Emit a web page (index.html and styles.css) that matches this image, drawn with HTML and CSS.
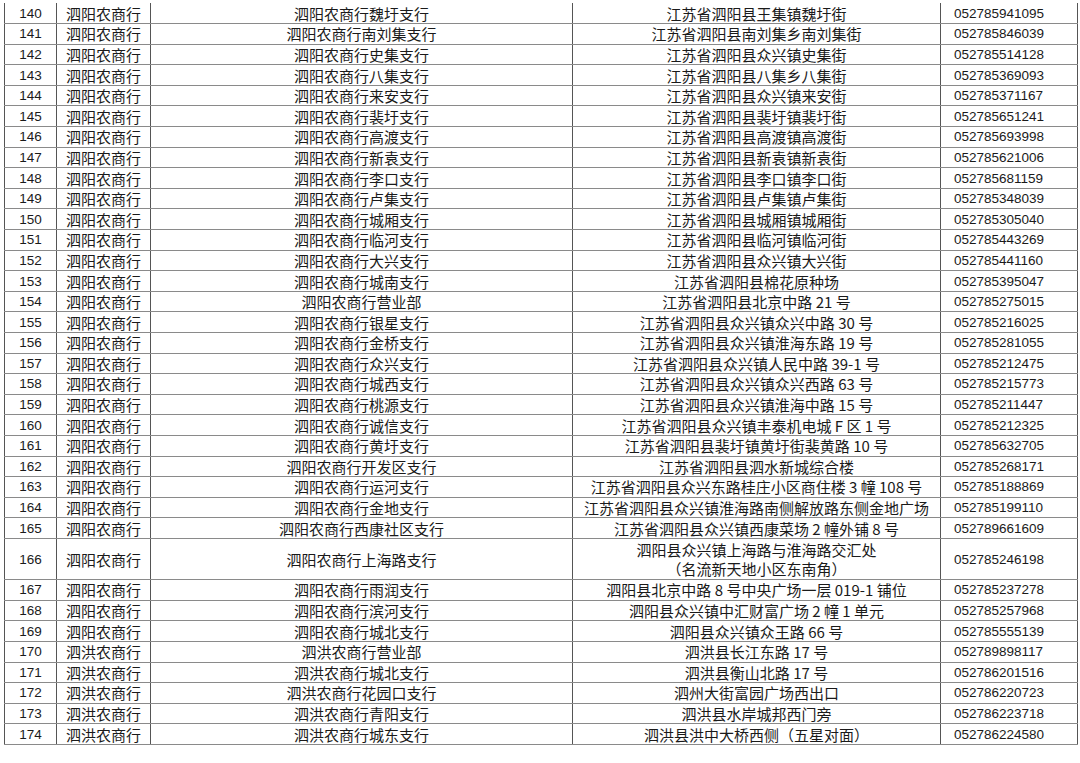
FILE: index.html
```html
<!DOCTYPE html>
<html lang="zh-CN">
<head>
<meta charset="utf-8">
<title>网点列表</title>
<link rel="stylesheet" href="styles.css">
</head>
<body>
<table class="list">
<colgroup>
<col class="c-no"><col class="c-bank"><col class="c-name"><col class="c-addr"><col class="c-tel">
</colgroup>
<tbody>
<tr><td class="no">140</td><td class="bank">泗阳农商行</td><td class="name">泗阳农商行魏圩支行</td><td class="addr">江苏省泗阳县王集镇魏圩街</td><td class="tel">052785941095</td></tr>
<tr><td class="no">141</td><td class="bank">泗阳农商行</td><td class="name">泗阳农商行南刘集支行</td><td class="addr">江苏省泗阳县南刘集乡南刘集街</td><td class="tel">052785846039</td></tr>
<tr><td class="no">142</td><td class="bank">泗阳农商行</td><td class="name">泗阳农商行史集支行</td><td class="addr">江苏省泗阳县众兴镇史集街</td><td class="tel">052785514128</td></tr>
<tr><td class="no">143</td><td class="bank">泗阳农商行</td><td class="name">泗阳农商行八集支行</td><td class="addr">江苏省泗阳县八集乡八集街</td><td class="tel">052785369093</td></tr>
<tr><td class="no">144</td><td class="bank">泗阳农商行</td><td class="name">泗阳农商行来安支行</td><td class="addr">江苏省泗阳县众兴镇来安街</td><td class="tel">052785371167</td></tr>
<tr><td class="no">145</td><td class="bank">泗阳农商行</td><td class="name">泗阳农商行裴圩支行</td><td class="addr">江苏省泗阳县裴圩镇裴圩街</td><td class="tel">052785651241</td></tr>
<tr><td class="no">146</td><td class="bank">泗阳农商行</td><td class="name">泗阳农商行高渡支行</td><td class="addr">江苏省泗阳县高渡镇高渡街</td><td class="tel">052785693998</td></tr>
<tr><td class="no">147</td><td class="bank">泗阳农商行</td><td class="name">泗阳农商行新袁支行</td><td class="addr">江苏省泗阳县新袁镇新袁街</td><td class="tel">052785621006</td></tr>
<tr><td class="no">148</td><td class="bank">泗阳农商行</td><td class="name">泗阳农商行李口支行</td><td class="addr">江苏省泗阳县李口镇李口街</td><td class="tel">052785681159</td></tr>
<tr><td class="no">149</td><td class="bank">泗阳农商行</td><td class="name">泗阳农商行卢集支行</td><td class="addr">江苏省泗阳县卢集镇卢集街</td><td class="tel">052785348039</td></tr>
<tr><td class="no">150</td><td class="bank">泗阳农商行</td><td class="name">泗阳农商行城厢支行</td><td class="addr">江苏省泗阳县城厢镇城厢街</td><td class="tel">052785305040</td></tr>
<tr><td class="no">151</td><td class="bank">泗阳农商行</td><td class="name">泗阳农商行临河支行</td><td class="addr">江苏省泗阳县临河镇临河街</td><td class="tel">052785443269</td></tr>
<tr><td class="no">152</td><td class="bank">泗阳农商行</td><td class="name">泗阳农商行大兴支行</td><td class="addr">江苏省泗阳县众兴镇大兴街</td><td class="tel">052785441160</td></tr>
<tr><td class="no">153</td><td class="bank">泗阳农商行</td><td class="name">泗阳农商行城南支行</td><td class="addr">江苏省泗阳县棉花原种场</td><td class="tel">052785395047</td></tr>
<tr><td class="no">154</td><td class="bank">泗阳农商行</td><td class="name">泗阳农商行营业部</td><td class="addr">江苏省泗阳县北京中路 21 号</td><td class="tel">052785275015</td></tr>
<tr><td class="no">155</td><td class="bank">泗阳农商行</td><td class="name">泗阳农商行银星支行</td><td class="addr">江苏省泗阳县众兴镇众兴中路 30 号</td><td class="tel">052785216025</td></tr>
<tr><td class="no">156</td><td class="bank">泗阳农商行</td><td class="name">泗阳农商行金桥支行</td><td class="addr">江苏省泗阳县众兴镇淮海东路 19 号</td><td class="tel">052785281055</td></tr>
<tr><td class="no">157</td><td class="bank">泗阳农商行</td><td class="name">泗阳农商行众兴支行</td><td class="addr">江苏省泗阳县众兴镇人民中路 39-1 号</td><td class="tel">052785212475</td></tr>
<tr><td class="no">158</td><td class="bank">泗阳农商行</td><td class="name">泗阳农商行城西支行</td><td class="addr">江苏省泗阳县众兴镇众兴西路 63 号</td><td class="tel">052785215773</td></tr>
<tr><td class="no">159</td><td class="bank">泗阳农商行</td><td class="name">泗阳农商行桃源支行</td><td class="addr">江苏省泗阳县众兴镇淮海中路 15 号</td><td class="tel">052785211447</td></tr>
<tr><td class="no">160</td><td class="bank">泗阳农商行</td><td class="name">泗阳农商行诚信支行</td><td class="addr">江苏省泗阳县众兴镇丰泰机电城 F 区 1 号</td><td class="tel">052785212325</td></tr>
<tr><td class="no">161</td><td class="bank">泗阳农商行</td><td class="name">泗阳农商行黄圩支行</td><td class="addr">江苏省泗阳县裴圩镇黄圩街裴黄路 10 号</td><td class="tel">052785632705</td></tr>
<tr><td class="no">162</td><td class="bank">泗阳农商行</td><td class="name">泗阳农商行开发区支行</td><td class="addr">江苏省泗阳县泗水新城综合楼</td><td class="tel">052785268171</td></tr>
<tr><td class="no">163</td><td class="bank">泗阳农商行</td><td class="name">泗阳农商行运河支行</td><td class="addr">江苏省泗阳县众兴东路桂庄小区商住楼 3 幢 108 号</td><td class="tel">052785188869</td></tr>
<tr><td class="no">164</td><td class="bank">泗阳农商行</td><td class="name">泗阳农商行金地支行</td><td class="addr">江苏省泗阳县众兴镇淮海路南侧解放路东侧金地广场</td><td class="tel">052785199110</td></tr>
<tr><td class="no">165</td><td class="bank">泗阳农商行</td><td class="name">泗阳农商行西康社区支行</td><td class="addr">江苏省泗阳县众兴镇西康菜场 2 幢外铺 8 号</td><td class="tel">052789661609</td></tr>
<tr class="tall"><td class="no">166</td><td class="bank">泗阳农商行</td><td class="name">泗阳农商行上海路支行</td><td class="addr">泗阳县众兴镇上海路与淮海路交汇处<br>（名流新天地小区东南角）</td><td class="tel">052785246198</td></tr>
<tr><td class="no">167</td><td class="bank">泗阳农商行</td><td class="name">泗阳农商行雨润支行</td><td class="addr">泗阳县北京中路 8 号中央广场一层 019-1 铺位</td><td class="tel">052785237278</td></tr>
<tr><td class="no">168</td><td class="bank">泗阳农商行</td><td class="name">泗阳农商行滨河支行</td><td class="addr">泗阳县众兴镇中汇财富广场 2 幢 1 单元</td><td class="tel">052785257968</td></tr>
<tr><td class="no">169</td><td class="bank">泗阳农商行</td><td class="name">泗阳农商行城北支行</td><td class="addr">泗阳县众兴镇众王路 66 号</td><td class="tel">052785555139</td></tr>
<tr><td class="no">170</td><td class="bank">泗洪农商行</td><td class="name">泗洪农商行营业部</td><td class="addr">泗洪县长江东路 17 号</td><td class="tel">052789898117</td></tr>
<tr><td class="no">171</td><td class="bank">泗洪农商行</td><td class="name">泗洪农商行城北支行</td><td class="addr">泗洪县衡山北路 17 号</td><td class="tel">052786201516</td></tr>
<tr><td class="no">172</td><td class="bank">泗洪农商行</td><td class="name">泗洪农商行花园口支行</td><td class="addr">泗州大街富园广场西出口</td><td class="tel">052786220723</td></tr>
<tr><td class="no">173</td><td class="bank">泗洪农商行</td><td class="name">泗洪农商行青阳支行</td><td class="addr">泗洪县水岸城邦西门旁</td><td class="tel">052786223718</td></tr>
<tr><td class="no">174</td><td class="bank">泗洪农商行</td><td class="name">泗洪农商行城东支行</td><td class="addr">泗洪县洪中大桥西侧（五星对面）</td><td class="tel">052786224580</td></tr>
</tbody>
</table>
</body>
</html>
```
FILE: styles.css
```css
html, body {
  margin: 0;
  padding: 0;
  background: #ffffff;
}
body {
  padding: 3px 0 0 4px;
  font-family: "Noto Sans CJK SC", "Liberation Sans", sans-serif;
  color: #1a1a1a;
}
.list {
  border-collapse: collapse;
  table-layout: fixed;
  width: 1073px;
  font-size: 15px;
}
.c-no { width: 52px; }
.c-bank { width: 94px; }
.c-name { width: 422px; }
.c-addr { width: 368px; }
.c-tel { width: 137px; }
.list tr { height: 20.6px; }
.list tr.tall { height: 41.2px; }
.list td {
  padding: 0;
  line-height: 19px;
  vertical-align: middle;
  white-space: nowrap;
  border-left: 1px solid #555555;
  border-right: 1px solid #555555;
  border-bottom: 1px solid #8a8a8a;
  overflow: hidden;
}
.list td.no {
  text-align: center;
  font-family: "Liberation Sans", sans-serif;
  font-size: 13.5px;
}
.list td.bank {
  text-align: left;
  padding-left: 9px;
}
.list td.name,
.list td.addr {
  text-align: center;
}
.list td.tel {
  text-align: left;
  padding-left: 13px;
  font-family: "Liberation Sans", sans-serif;
  font-size: 13.5px;
}
```
